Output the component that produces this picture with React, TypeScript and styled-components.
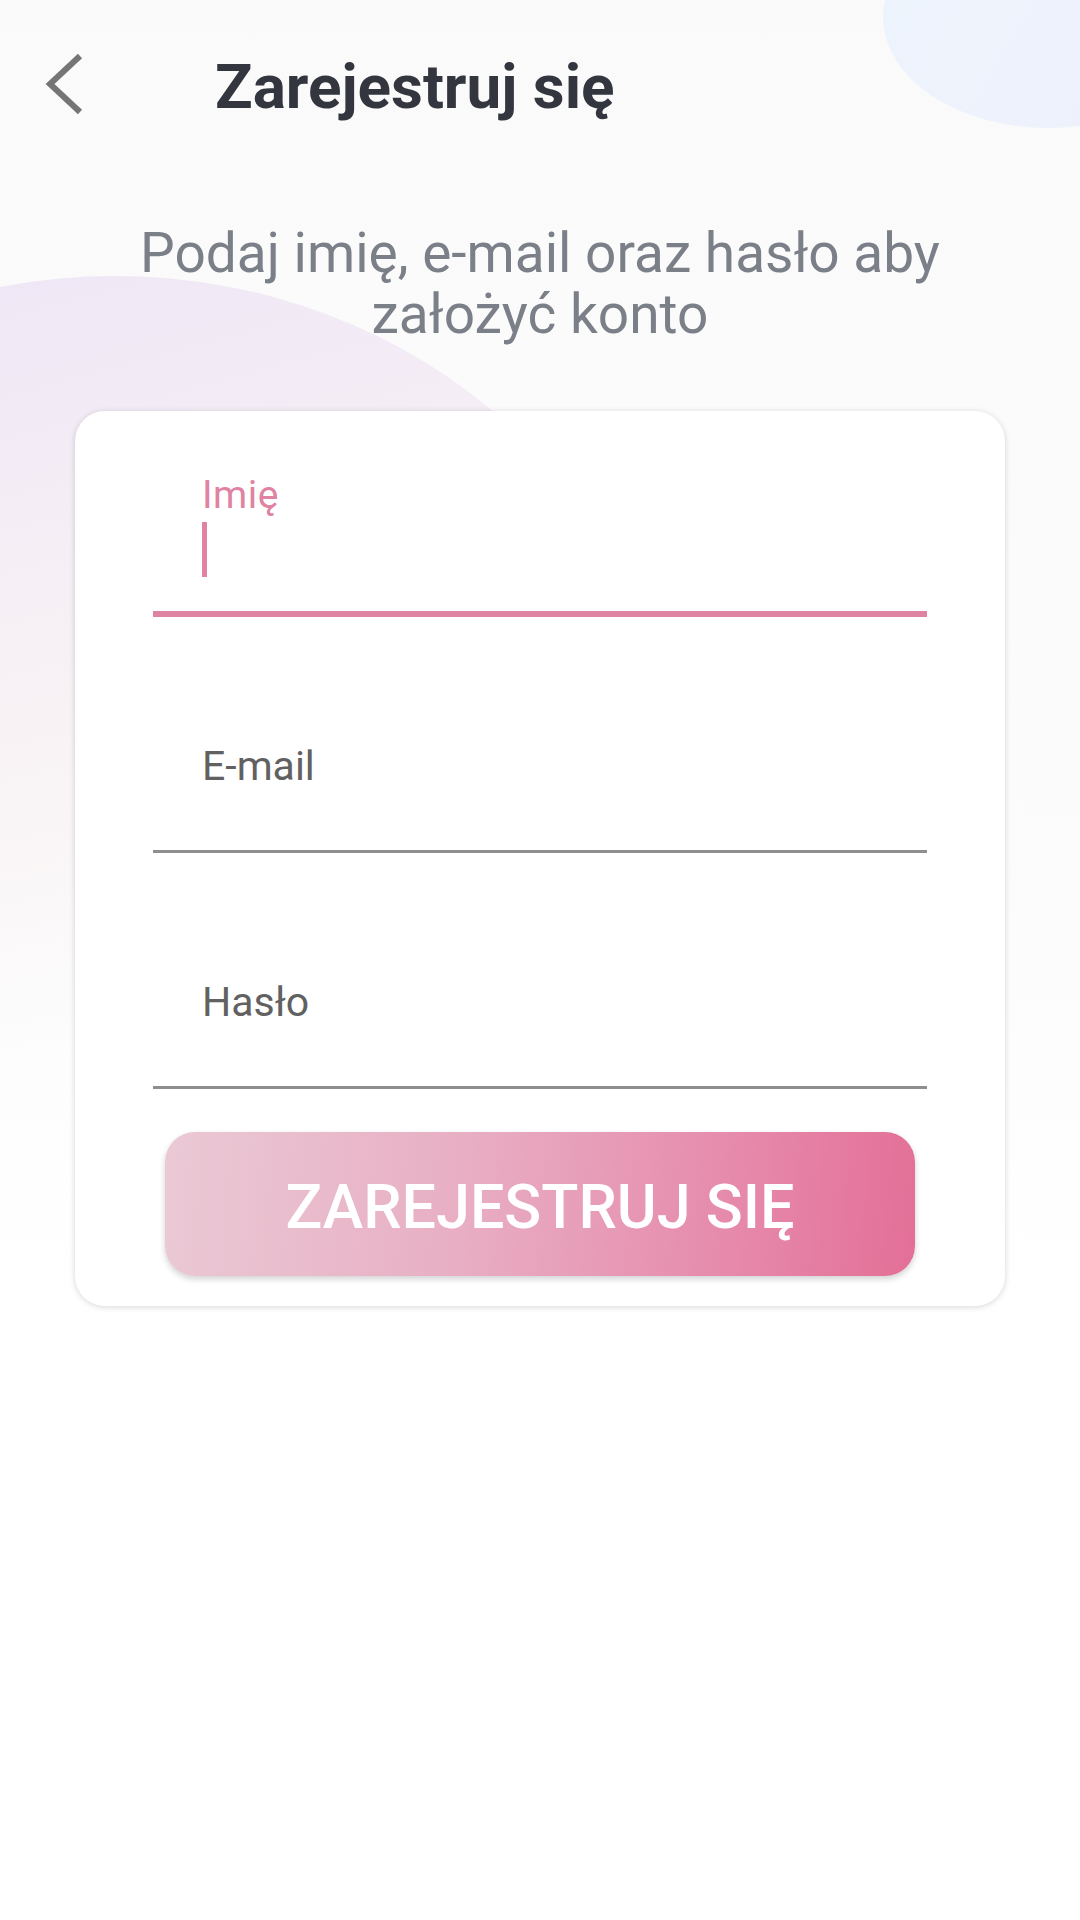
import React from 'react';
import styled, { createGlobalStyle } from 'styled-components';

const GlobalStyle = createGlobalStyle`
    html, body {
        margin: 0;
        padding: 0;
        background: #ffffff;
    }
    * {
        box-sizing: border-box;
    }
`;

const pink = '#e083a3';

const Page = styled.div`
    background: linear-gradient(180deg, #fafafa 0px, #fcfcfc 900px, #ffffff 1320px);
    font-family: Roboto, 'Noto Sans', 'Liberation Sans', sans-serif;
    min-height: 1920px;
    overflow: hidden;
    position: relative;
    width: 1080px;
`;

// decorative background shapes, sit behind the content
const BlobTopRight = styled.div`
    background: linear-gradient(120deg, #edf4fc 0%, #eef0fc 100%);
    border-radius: 50%;
    height: 222px;
    left: 883px;
    position: absolute;
    top: -94px;
    width: 330px;
`;

const BlobLeft = styled.div`
    background: linear-gradient(165deg, #ede4f6 0%, #f5eef5 30%, #f9f4f5 48%, rgba(252, 252, 252, 0) 68%);
    border-radius: 50%;
    height: 1030px;
    left: -445px;
    position: absolute;
    top: 276px;
    width: 1120px;
`;

const Content = styled.div`
    position: relative;
`;

const Header = styled.div`
    align-items: flex-start;
    display: flex;
    padding: 48px 0 0 40px;
`;

const BackButton = styled.button`
    background: none;
    border: none;
    cursor: pointer;
    display: block;
    height: 72px;
    padding: 0;
    width: 48px;
`;

const Title = styled.h1`
    color: #33363f;
    font-size: 62px;
    font-weight: 700;
    line-height: 63px;
    margin: 7px 0 0 127px;
`;

const Subtitle = styled.p`
    color: #7a7f88;
    font-size: 55px;
    font-weight: 400;
    line-height: 61px;
    margin: 103px auto 0;
    max-width: 900px;
    text-align: center;
`;

const Card = styled.div`
    background: #ffffff;
    border-radius: 30px;
    box-shadow: 0 1px 6px rgba(0, 0, 0, 0.16);
    margin: 66px auto 0;
    padding: 36px 78px 30px;
    width: 930px;
`;

const Field = styled.div<{ focused?: boolean }>`
    border-bottom: ${props => (props.focused ? `6px solid ${pink}` : '3px solid #8e8e8e')};
    display: flex;
    flex-direction: column;
    height: 170px;
    justify-content: flex-end;
    padding-left: 49px;

    & + & {
        margin-top: 66px;
    }
`;

const FloatLabel = styled.label`
    color: ${pink};
    font-size: 39px;
    letter-spacing: 0.5px;
    line-height: 44px;
`;

const RestLabel = styled.label`
    color: #616161;
    font-size: 41px;
    line-height: 50px;
    margin-bottom: 59px;
`;

const Caret = styled.span`
    background: ${pink};
    display: block;
    height: 55px;
    margin: 5px 0 34px 0;
    width: 5px;
`;

const SubmitButton = styled.button`
    background: linear-gradient(95deg, #eac9d5 0%, #e8aec3 40%, #e68aab 75%, #e36f97 100%);
    border: none;
    border-radius: 30px;
    box-shadow: 0 3px 6px rgba(0, 0, 0, 0.18);
    color: #ffffff;
    cursor: pointer;
    display: block;
    font-family: Roboto, 'Noto Sans', 'Liberation Sans', sans-serif;
    font-size: 61px;
    font-weight: 500;
    height: 144px;
    margin: 43px 12px 0;
    padding: 6px 0 0;
    width: calc(100% - 24px);
`;

const ChevronLeft = () => (
    <svg width="48" height="72" viewBox="0 0 48 72">
        <path d="M40 8 L10 36 L40 64" fill="none" stroke="#757575" strokeWidth="6" />
    </svg>
);

const App = () => {
    return (
        <Page>
            <GlobalStyle />
            <BlobTopRight />
            <BlobLeft />
            <Content>
                <Header>
                    <BackButton aria-label="Wstecz">
                        <ChevronLeft />
                    </BackButton>
                    <Title>Zarejestruj się</Title>
                </Header>
                <Subtitle>Podaj imię, e-mail oraz hasło aby założyć konto</Subtitle>
                <Card>
                    <Field focused>
                        <FloatLabel>Imię</FloatLabel>
                        <Caret />
                    </Field>
                    <Field>
                        <RestLabel>E-mail</RestLabel>
                    </Field>
                    <Field>
                        <RestLabel>Hasło</RestLabel>
                    </Field>
                    <SubmitButton>ZAREJESTRUJ SIĘ</SubmitButton>
                </Card>
            </Content>
        </Page>
    );
};

export default App;
